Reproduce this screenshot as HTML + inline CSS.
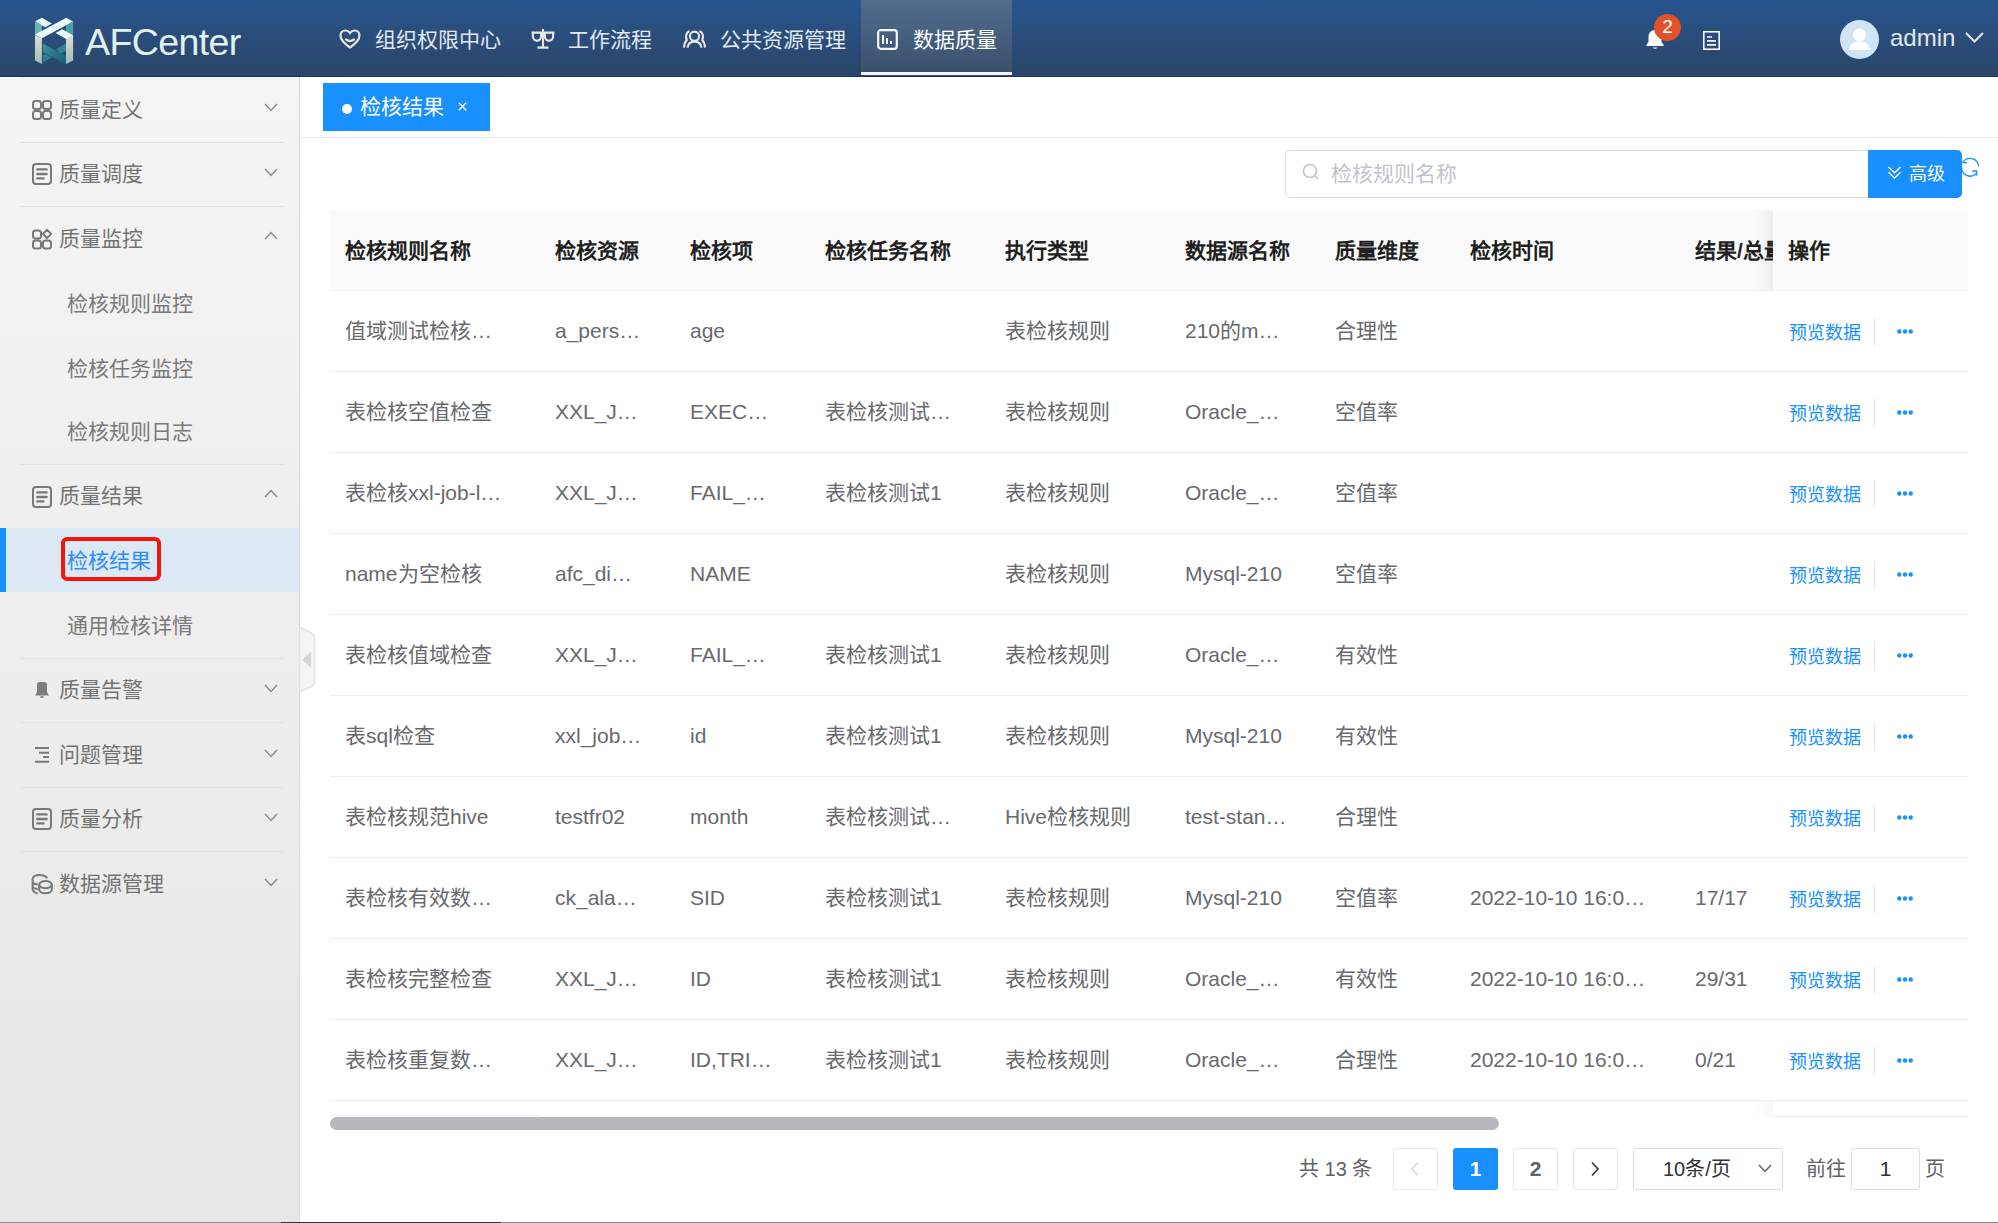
<!DOCTYPE html>
<html lang="zh-CN">
<head>
<meta charset="utf-8">
<style>
*{box-sizing:border-box;margin:0;padding:0}
html,body{width:1998px;height:1223px;overflow:hidden;background:#fff}
body{position:relative;font-family:"Liberation Sans",sans-serif;font-size:21px;color:#606266}
.a{position:absolute}
.t{position:absolute;white-space:nowrap;line-height:24px}
/* header */
#hdr{position:absolute;left:0;top:0;width:1998px;height:77px;background:linear-gradient(#28558f,#2b4566);}
#hdr .line{position:absolute;left:0;top:76px;width:1998px;height:1px;background:#11316a}
.nav{position:absolute;top:0;height:77px;color:#e4e8ee}
.navact{position:absolute;left:861px;top:0;width:151px;height:76px;background:linear-gradient(rgba(157,145,134,0.36),rgba(140,140,135,0.14))}
.navul{position:absolute;left:861px;top:72px;width:151px;height:3px;background:#eef6fb}
/* sidebar */
#side{position:absolute;left:0;top:77px;width:300px;height:1146px;background:linear-gradient(#f4f4f4,#e7e7e7);border-right:1px solid #d9d9d9}
.sep{position:absolute;left:20px;width:264px;height:1px;background:#dfe3e8}
.gi{position:absolute;left:59px;color:#737373;font-size:21px}
.si{position:absolute;left:67px;color:#7a7a7a;font-size:21px}
.chev{position:absolute;left:264px;width:14px;height:9px}
/* main */
#tabbar{position:absolute;left:300px;top:77px;width:1698px;height:61px;border-bottom:1px solid #e6e9ef}
#tab{position:absolute;left:323px;top:83px;width:167px;height:48px;background:#1890ff;color:#fff}
.th{position:absolute;white-space:nowrap;line-height:24px;color:#1f1f1f;font-weight:bold;font-size:21px}
.td{position:absolute;color:#68696d;font-size:21px}
.rowb{position:absolute;left:330px;width:1638px;height:1px;background:#ebeef5}
.op{position:absolute;left:1789px;color:#1890ff;font-size:18px}
.opsep{position:absolute;left:1874px;width:1px;height:28px;background:#e4e7ed}
.dots{position:absolute;left:1897px;width:16px;height:5px}
.pbtn{position:absolute;top:1148px;width:45px;height:42px;border:1px solid #e4e7ed;border-radius:3px;background:#fff}
</style>
</head>
<body>

<!-- HEADER -->
<div id="hdr">
  <div class="line"></div>
  <!-- logo -->
  <svg class="a" style="left:30px;top:14px" width="50" height="54" viewBox="0 0 50 54">
    <defs>
      <linearGradient id="lg1" x1="0" y1="0" x2="0" y2="1"><stop offset="0" stop-color="#dcdfcf"/><stop offset="1" stop-color="#a3bab6"/></linearGradient>
      <linearGradient id="lg2" x1="0" y1="0" x2="1" y2="1"><stop offset="0" stop-color="#44909a"/><stop offset="1" stop-color="#0f5f7e"/></linearGradient>
    </defs>
    <polygon points="4.95,7.5 11.9,11.3 11.9,24.3 4.95,21.2" fill="#6cb5b1"/>
    <polygon points="36,11.3 43.1,7.5 43.1,21.2 36,24.7" fill="#4b9da1"/>
    <polygon points="4.95,21.2 11.9,24.3 11.9,49.9 4.95,46.4" fill="url(#lg1)"/>
    <polygon points="36,24.7 43.1,21.2 43.1,46.4 36,49.9" fill="url(#lg1)"/>
    <polygon points="12.8,29.6 36,42 36,50 12.8,38" fill="url(#lg2)"/>
    <polygon points="26,34.9 36,29.4 36,36.9 30.5,39.6" fill="#2f8595"/>
    <polygon points="12.8,41.3 16,40 21.9,43.4 12.8,48.6" fill="#2a7f92"/>
    <polygon points="5.1,7.3 11.9,3.75 21.9,9.5 15.2,13.25" fill="#e9fbfa"/>
    <polygon points="5.1,20.5 36.2,3.75 43.1,7.5 11.9,24.3" fill="#e9fbfa"/>
    <polygon points="25.6,19 32.2,15.2 43.1,21.2 36.2,25" fill="#e9fbfa"/>
  </svg>
  <div class="t" style="left:85px;top:20px;font-size:37.5px;line-height:44px;color:#e2f1ec;letter-spacing:-0.6px">AFCenter</div>

  <!-- nav -->
  <div class="navact"></div>
  <div class="navul"></div>
  <svg class="a" style="left:339px;top:29px" width="22" height="20" viewBox="0 0 22 20"><path d="M11 18.5 C6 15 1.5 11.5 1.5 6.5 C1.5 3.5 3.8 1.5 6.5 1.5 C8.5 1.5 10 2.5 11 4 C12 2.5 13.5 1.5 15.5 1.5 C18.2 1.5 20.5 3.5 20.5 6.5 C20.5 11.5 16 15 11 18.5Z" fill="none" stroke="#e8e4e0" stroke-width="2.2"/><path d="M7 10.5 Q11 13.5 15 10.5" fill="none" stroke="#e8e4e0" stroke-width="2.2" stroke-linecap="round"/></svg>
  <div class="t nav" style="left:375px;top:28px;height:24px">组织权限中心</div>
  <svg class="a" style="left:531px;top:29px" width="24" height="21" viewBox="0 0 24 21"><g fill="none" stroke="#ebe6e0" stroke-width="2.1"><path d="M0.5 3.6 H23.5 M12 0 V19.5 M6.5 18.6 H17.5"/><path d="M1.9 4 V7.6 A4.1 4.1 0 0 0 10.1 7.6 V4"/><path d="M13.9 4 V7.6 A4.1 4.1 0 0 0 22.1 7.6 V4"/></g></svg>
  <div class="t nav" style="left:568px;top:28px">工作流程</div>
  <svg class="a" style="left:683px;top:29px" width="24" height="20" viewBox="0 0 24 20"><g fill="none" stroke="#ebe6e0" stroke-width="2.1"><circle cx="11.5" cy="7.2" r="4.6"/><path d="M4.6 18.6 C5 14.5 7.8 12.6 11.5 12.6 C15.2 12.6 18 14.5 18.4 18.6"/><path d="M6.5 2 C3 3.3 2.2 8 3.8 11 C2 12.8 1.2 15.5 1.1 18.6"/><path d="M16.5 2 C20 3.3 20.8 8 19.2 11 C21 12.8 21.8 15.5 21.9 18.6"/></g></svg>
  <div class="t nav" style="left:720px;top:28px">公共资源管理</div>
  <svg class="a" style="left:877px;top:29px" width="21" height="21" viewBox="0 0 21 21"><rect x="1.2" y="1.2" width="18.6" height="18.6" rx="2.5" fill="none" stroke="#f4f8fc" stroke-width="2.2"/><rect x="5" y="6" width="2" height="9" fill="#f4f8fc"/><rect x="9" y="9" width="2" height="6" fill="#f4f8fc"/><rect x="13" y="12" width="2" height="3" fill="#f4f8fc"/></svg>
  <div class="t nav" style="left:913px;top:28px;color:#fff">数据质量</div>

  <!-- right -->
  <svg class="a" style="left:1645px;top:29px" width="20" height="21" viewBox="0 0 20 21"><path d="M10 1 C6 1 3.5 4 3.5 8 V13 L1.5 15.5 V17 H18.5 V15.5 L16.5 13 V8 C16.5 4 14 1 10 1Z" fill="#fff"/><path d="M7.5 18.5 Q10 21 12.5 18.5Z" fill="#fff"/></svg>
  <div class="a" style="left:1654px;top:14px;width:27px;height:27px;border-radius:50%;background:#e0522a;color:#fff;font-size:19px;line-height:25px;text-align:center">2</div>
  <svg class="a" style="left:1703px;top:31px" width="17" height="19" viewBox="0 0 17 19"><rect x="0.8" y="0.8" width="15.4" height="17.4" fill="none" stroke="#f4f6fb" stroke-width="1.6"/><path d="M4 6 H9 M4 9.9 H13 M4 13.8 H13" stroke="#f4f6fb" stroke-width="1.7"/></svg>
  <div class="a" style="left:1840px;top:20px;width:39px;height:39px;border-radius:50%;background:#d0e4f8;overflow:hidden">
    <svg width="39" height="39" viewBox="0 0 39 39"><circle cx="19.5" cy="15" r="6.5" fill="#fff"/><path d="M9 30 C9.5 24 13.5 21.5 19.5 21.5 C25.5 21.5 29.5 24 30 30Z" fill="#fff"/></svg>
  </div>
  <div class="t" style="left:1890px;top:24px;font-size:24px;line-height:28px;color:#e6e6e6">admin</div>
  <svg class="a" style="left:1965px;top:32px" width="19" height="11" viewBox="0 0 19 11"><path d="M1 1 L9.5 9.5 L18 1" fill="none" stroke="#e6e6e6" stroke-width="2"/></svg>
</div>

<!-- SIDEBAR -->
<div id="side"></div>
<!-- sidebar items -->
<div class="a" style="left:0;top:77px;width:20px;height:1px;background:#fff"></div>
<div class="sep" style="top:142px"></div>
<div class="sep" style="top:206px"></div>
<div class="sep" style="top:464px"></div>
<div class="sep" style="top:658px"></div>
<div class="sep" style="top:722px"></div>
<div class="sep" style="top:787px"></div>
<div class="sep" style="top:851px"></div>
<div class="a" style="left:0;top:528px;width:299px;height:64px;background:#dde8f5"></div>
<div class="a" style="left:0;top:528px;width:6px;height:64px;background:#1890ff"></div>

<!-- icons -->
<svg class="a" style="left:31px;top:99px" width="22" height="22" viewBox="0 0 22 22"><g fill="none" stroke="#777a7a" stroke-width="2"><rect x="2" y="2" width="8" height="8" rx="2.5"/><rect x="12" y="2" width="8" height="8" rx="2.5"/><rect x="2" y="12" width="8" height="8" rx="2.5"/><rect x="12" y="12" width="8" height="8" rx="2.5"/></g></svg>
<svg class="a" style="left:31px;top:162px" width="22" height="24" viewBox="0 0 22 24"><g fill="none" stroke="#777a7a" stroke-width="2"><rect x="2" y="2" width="18" height="20" rx="3"/></g><g stroke="#777a7a" stroke-width="2.4" stroke-linecap="round"><path d="M6.3 7.4 H15.6 M6.3 12 H15.6 M6.3 16.4 H12.4"/></g></svg>
<svg class="a" style="left:31px;top:228px" width="22" height="22" viewBox="0 0 22 22"><g fill="none" stroke="#777a7a" stroke-width="2"><rect x="2" y="2.5" width="8" height="8" rx="2.5"/><path d="M16 1.7 L20.2 5.9 L16 10.1 L11.8 5.9Z" stroke-linejoin="round"/><rect x="2" y="12.5" width="8" height="8" rx="2.5"/><rect x="12" y="12.5" width="8" height="8" rx="2.5"/></g></svg>
<svg class="a" style="left:31px;top:485px" width="22" height="24" viewBox="0 0 22 24"><g fill="none" stroke="#777a7a" stroke-width="2"><rect x="2" y="2" width="18" height="20" rx="3"/></g><g stroke="#777a7a" stroke-width="2.4" stroke-linecap="round"><path d="M6.3 7.4 H15.6 M6.3 12 H15.6 M6.3 16.4 H12.4"/></g></svg>
<svg class="a" style="left:33px;top:680px" width="18" height="19" viewBox="0 0 18 19"><path d="M6 2 H12 Q14 2 14 4.5 V12 L16 15.5 H2 L4 12 V4.5 Q4 2 6 2Z" fill="#7b7e7e"/><ellipse cx="9" cy="17" rx="1.8" ry="0.9" fill="#7b7e7e"/></svg>
<svg class="a" style="left:33px;top:744px" width="18" height="20" viewBox="0 0 18 20"><g stroke="#777a7a" stroke-width="2"><path d="M2 4 H16 M6 8.8 H16 M10 13 H16 M2 17.8 H16"/></g></svg>
<svg class="a" style="left:31px;top:807px" width="22" height="24" viewBox="0 0 22 24"><g fill="none" stroke="#777a7a" stroke-width="2"><rect x="2" y="2" width="18" height="20" rx="3"/></g><g stroke="#777a7a" stroke-width="2.4" stroke-linecap="round"><path d="M6.3 7.4 H15.6 M6.3 12 H15.6 M6.3 16.4 H12.4"/></g></svg>
<svg class="a" style="left:30px;top:872px" width="24" height="24" viewBox="0 0 24 24"><g fill="none" stroke="#777a7a" stroke-width="2"><path d="M17.2 6.2 C15.8 4 13 3 9.5 3 C5.2 3 2.6 4.8 2.6 7 V17 C2.6 19.5 4.5 20.6 7.8 21.6"/><path d="M2.6 10.5 C3.5 11.6 5.5 12.2 7.8 12.6 M2.6 15 C3.5 16.2 5.5 16.8 7.8 17.2"/><ellipse cx="15.5" cy="12.6" rx="6.3" ry="3.6"/><path d="M9.2 12.6 V17.6 C9.2 19.8 12 21.3 15.5 21.3 C19 21.3 21.8 19.8 21.8 17.6 V12.6"/></g></svg>

<!-- labels -->
<div class="t gi" style="top:98px">质量定义</div>
<div class="t gi" style="top:162px">质量调度</div>
<div class="t gi" style="top:227px">质量监控</div>
<div class="t si" style="top:292px">检核规则监控</div>
<div class="t si" style="top:357px">检核任务监控</div>
<div class="t si" style="top:420px">检核规则日志</div>
<div class="t gi" style="top:484px">质量结果</div>
<div class="t si" style="top:549px;color:#2b8ef8">检核结果</div>
<div class="t si" style="top:614px">通用检核详情</div>
<div class="t gi" style="top:678px">质量告警</div>
<div class="t gi" style="top:743px">问题管理</div>
<div class="t gi" style="top:807px">质量分析</div>
<div class="t gi" style="top:872px">数据源管理</div>
<div class="a" style="left:61px;top:537px;width:100px;height:44px;border:4.5px solid #f2160f;border-radius:6px"></div>

<!-- chevrons -->
<svg class="chev" style="top:103px" viewBox="0 0 14 9"><path d="M1 1 L7 7.5 L13 1" fill="none" stroke="#8c8c8c" stroke-width="1.5"/></svg>
<svg class="chev" style="top:168px" viewBox="0 0 14 9"><path d="M1 1 L7 7.5 L13 1" fill="none" stroke="#8c8c8c" stroke-width="1.5"/></svg>
<svg class="chev" style="top:231px" viewBox="0 0 14 9"><path d="M1 8 L7 1.5 L13 8" fill="none" stroke="#8c8c8c" stroke-width="1.5"/></svg>
<svg class="chev" style="top:489px" viewBox="0 0 14 9"><path d="M1 8 L7 1.5 L13 8" fill="none" stroke="#8c8c8c" stroke-width="1.5"/></svg>
<svg class="chev" style="top:684px" viewBox="0 0 14 9"><path d="M1 1 L7 7.5 L13 1" fill="none" stroke="#8c8c8c" stroke-width="1.5"/></svg>
<svg class="chev" style="top:749px" viewBox="0 0 14 9"><path d="M1 1 L7 7.5 L13 1" fill="none" stroke="#8c8c8c" stroke-width="1.5"/></svg>
<svg class="chev" style="top:813px" viewBox="0 0 14 9"><path d="M1 1 L7 7.5 L13 1" fill="none" stroke="#8c8c8c" stroke-width="1.5"/></svg>
<svg class="chev" style="top:878px" viewBox="0 0 14 9"><path d="M1 1 L7 7.5 L13 1" fill="none" stroke="#8c8c8c" stroke-width="1.5"/></svg>

<!-- collapse handle -->
<svg class="a" style="left:299px;top:625px" width="18" height="70" viewBox="0 0 18 70"><path d="M0.5 2.2 L10.3 7 Q15.5 9.5 15.5 12.8 V57 Q15.5 60.3 10.3 62.5 L0.5 67 Z" fill="#f4f4f4" stroke="#dde3ea" stroke-width="1.6"/></svg>
<svg class="a" style="left:301px;top:650px" width="11" height="20" viewBox="0 0 11 20"><path d="M10.1 1.5 V18 L1.3 9.7Z" fill="#d5d5d5"/></svg>
<!-- MAIN -->
<!--MAIN_START-->
<!-- tab bar -->
<div id="tabbar"></div>
<div id="tab"><div class="a" style="left:19px;top:21px;width:10px;height:10px;border-radius:50%;background:#fff"></div><div class="t" style="left:37px;top:12px;color:#fff">检核结果</div><svg class="a" style="left:135px;top:19px" width="9" height="9" viewBox="0 0 9 9"><path d="M0.8 0.8 L8.2 8.2 M8.2 0.8 L0.8 8.2" stroke="#fff" stroke-width="1.4"/></svg></div>
<!-- search -->
<div class="a" style="left:1285px;top:150px;width:600px;height:48px;border:1px solid #dcdfe6;border-radius:5px;background:#fff"></div>
<svg class="a" style="left:1302px;top:163px" width="18" height="18" viewBox="0 0 18 18"><circle cx="8" cy="8" r="6.5" fill="none" stroke="#c0c4cc" stroke-width="1.6"/><path d="M12.6 12.6 L16 16" stroke="#c0c4cc" stroke-width="1.6"/></svg>
<div class="t" style="left:1331px;top:162px;color:#c0c4cc">检核规则名称</div>
<div class="a" style="left:1868px;top:150px;width:94px;height:48px;background:#1890ff;border-radius:0 5px 5px 0"></div>
<svg class="a" style="left:1886px;top:165px" width="18" height="16" viewBox="0 0 18 16"><path d="M2.5 2 L8.5 7.8 L14.5 2 M2.5 7.2 L8.5 13 L14.5 7.2" fill="none" stroke="#fff" stroke-width="1.4"/></svg>
<div class="t" style="left:1909px;top:162px;color:#fff;font-size:18px">高级</div>
<svg class="a" style="left:1958px;top:155px" width="24" height="24" viewBox="0 0 24 24"><g fill="none" stroke="#1890ff" stroke-width="1.4"><path d="M4.6 7.7 H9"/><path d="M4.6 7.7 A8.6 8.6 0 0 1 20.6 11.5"/><path d="M3.6 12.5 A8.6 8.6 0 0 0 18.6 18.2"/><path d="M14.3 16 H18.6 V20.6"/></g></svg>
<!-- table -->
<div class="a" style="left:330px;top:210px;width:1638px;height:80px;background:#fafafa"></div>
<div class="rowb" style="top:290px"></div>
<div class="rowb" style="top:371px"></div>
<div class="rowb" style="top:452px"></div>
<div class="rowb" style="top:533px"></div>
<div class="rowb" style="top:614px"></div>
<div class="rowb" style="top:695px"></div>
<div class="rowb" style="top:776px"></div>
<div class="rowb" style="top:857px"></div>
<div class="rowb" style="top:938px"></div>
<div class="rowb" style="top:1019px"></div>
<div class="rowb" style="top:1100px"></div>
<div class="a" style="left:330px;top:210px;width:1443px;height:900px;overflow:hidden">
<div class="th" style="left:15px;top:29px">检核规则名称</div>
<div class="th" style="left:225px;top:29px">检核资源</div>
<div class="th" style="left:360px;top:29px">检核项</div>
<div class="th" style="left:495px;top:29px">检核任务名称</div>
<div class="th" style="left:675px;top:29px">执行类型</div>
<div class="th" style="left:855px;top:29px">数据源名称</div>
<div class="th" style="left:1005px;top:29px">质量维度</div>
<div class="th" style="left:1140px;top:29px">检核时间</div>
<div class="th" style="left:1365px;top:29px">结果/总量</div>
<div class="td t" style="left:15px;top:109px">值域测试检核…</div>
<div class="td t" style="left:225px;top:109px">a_pers…</div>
<div class="td t" style="left:360px;top:109px">age</div>
<div class="td t" style="left:675px;top:109px">表检核规则</div>
<div class="td t" style="left:855px;top:109px">210的m…</div>
<div class="td t" style="left:1005px;top:109px">合理性</div>
<div class="td t" style="left:15px;top:190px">表检核空值检查</div>
<div class="td t" style="left:225px;top:190px">XXL_J…</div>
<div class="td t" style="left:360px;top:190px">EXEC…</div>
<div class="td t" style="left:495px;top:190px">表检核测试…</div>
<div class="td t" style="left:675px;top:190px">表检核规则</div>
<div class="td t" style="left:855px;top:190px">Oracle_…</div>
<div class="td t" style="left:1005px;top:190px">空值率</div>
<div class="td t" style="left:15px;top:271px">表检核xxl-job-l…</div>
<div class="td t" style="left:225px;top:271px">XXL_J…</div>
<div class="td t" style="left:360px;top:271px">FAIL_…</div>
<div class="td t" style="left:495px;top:271px">表检核测试1</div>
<div class="td t" style="left:675px;top:271px">表检核规则</div>
<div class="td t" style="left:855px;top:271px">Oracle_…</div>
<div class="td t" style="left:1005px;top:271px">空值率</div>
<div class="td t" style="left:15px;top:352px">name为空检核</div>
<div class="td t" style="left:225px;top:352px">afc_di…</div>
<div class="td t" style="left:360px;top:352px">NAME</div>
<div class="td t" style="left:675px;top:352px">表检核规则</div>
<div class="td t" style="left:855px;top:352px">Mysql-210</div>
<div class="td t" style="left:1005px;top:352px">空值率</div>
<div class="td t" style="left:15px;top:433px">表检核值域检查</div>
<div class="td t" style="left:225px;top:433px">XXL_J…</div>
<div class="td t" style="left:360px;top:433px">FAIL_…</div>
<div class="td t" style="left:495px;top:433px">表检核测试1</div>
<div class="td t" style="left:675px;top:433px">表检核规则</div>
<div class="td t" style="left:855px;top:433px">Oracle_…</div>
<div class="td t" style="left:1005px;top:433px">有效性</div>
<div class="td t" style="left:15px;top:514px">表sql检查</div>
<div class="td t" style="left:225px;top:514px">xxl_job…</div>
<div class="td t" style="left:360px;top:514px">id</div>
<div class="td t" style="left:495px;top:514px">表检核测试1</div>
<div class="td t" style="left:675px;top:514px">表检核规则</div>
<div class="td t" style="left:855px;top:514px">Mysql-210</div>
<div class="td t" style="left:1005px;top:514px">有效性</div>
<div class="td t" style="left:15px;top:595px">表检核规范hive</div>
<div class="td t" style="left:225px;top:595px">testfr02</div>
<div class="td t" style="left:360px;top:595px">month</div>
<div class="td t" style="left:495px;top:595px">表检核测试…</div>
<div class="td t" style="left:675px;top:595px">Hive检核规则</div>
<div class="td t" style="left:855px;top:595px">test-stan…</div>
<div class="td t" style="left:1005px;top:595px">合理性</div>
<div class="td t" style="left:15px;top:676px">表检核有效数…</div>
<div class="td t" style="left:225px;top:676px">ck_ala…</div>
<div class="td t" style="left:360px;top:676px">SID</div>
<div class="td t" style="left:495px;top:676px">表检核测试1</div>
<div class="td t" style="left:675px;top:676px">表检核规则</div>
<div class="td t" style="left:855px;top:676px">Mysql-210</div>
<div class="td t" style="left:1005px;top:676px">空值率</div>
<div class="td t" style="left:1140px;top:676px">2022-10-10 16:0…</div>
<div class="td t" style="left:1365px;top:676px">17/17</div>
<div class="td t" style="left:15px;top:757px">表检核完整检查</div>
<div class="td t" style="left:225px;top:757px">XXL_J…</div>
<div class="td t" style="left:360px;top:757px">ID</div>
<div class="td t" style="left:495px;top:757px">表检核测试1</div>
<div class="td t" style="left:675px;top:757px">表检核规则</div>
<div class="td t" style="left:855px;top:757px">Oracle_…</div>
<div class="td t" style="left:1005px;top:757px">有效性</div>
<div class="td t" style="left:1140px;top:757px">2022-10-10 16:0…</div>
<div class="td t" style="left:1365px;top:757px">29/31</div>
<div class="td t" style="left:15px;top:838px">表检核重复数…</div>
<div class="td t" style="left:225px;top:838px">XXL_J…</div>
<div class="td t" style="left:360px;top:838px">ID,TRI…</div>
<div class="td t" style="left:495px;top:838px">表检核测试1</div>
<div class="td t" style="left:675px;top:838px">表检核规则</div>
<div class="td t" style="left:855px;top:838px">Oracle_…</div>
<div class="td t" style="left:1005px;top:838px">合理性</div>
<div class="td t" style="left:1140px;top:838px">2022-10-10 16:0…</div>
<div class="td t" style="left:1365px;top:838px">0/21</div>
</div>
<div class="a" style="left:1755px;top:210px;width:18px;height:80px;background:linear-gradient(to right,rgba(0,0,0,0),rgba(0,0,0,0.05))"></div>
<div class="a" style="left:1755px;top:1101px;width:18px;height:15px;background:linear-gradient(to right,rgba(0,0,0,0),rgba(0,0,0,0.035))"></div>
<div class="a" style="left:1773px;top:210px;width:195px;height:80px;background:#fafafa"></div>
<div class="a" style="left:1773px;top:1101px;width:195px;height:16px;background:#fff;border-bottom:1px solid #ebeef5"></div>
<div class="a" style="left:330px;top:1115px;width:210px;height:1px;background:#ebeef5"></div>
<div class="th t" style="left:1788px;top:239px">操作</div>
<div class="op t" style="top:321px">预览数据</div>
<div class="opsep" style="top:318px"></div>
<svg class="dots" style="top:329px" viewBox="0 0 16 5"><circle cx="2.3" cy="2.5" r="2.2" fill="#1890ff"/><circle cx="8" cy="2.5" r="2.2" fill="#1890ff"/><circle cx="13.7" cy="2.5" r="2.2" fill="#1890ff"/></svg>
<div class="op t" style="top:402px">预览数据</div>
<div class="opsep" style="top:399px"></div>
<svg class="dots" style="top:410px" viewBox="0 0 16 5"><circle cx="2.3" cy="2.5" r="2.2" fill="#1890ff"/><circle cx="8" cy="2.5" r="2.2" fill="#1890ff"/><circle cx="13.7" cy="2.5" r="2.2" fill="#1890ff"/></svg>
<div class="op t" style="top:483px">预览数据</div>
<div class="opsep" style="top:480px"></div>
<svg class="dots" style="top:491px" viewBox="0 0 16 5"><circle cx="2.3" cy="2.5" r="2.2" fill="#1890ff"/><circle cx="8" cy="2.5" r="2.2" fill="#1890ff"/><circle cx="13.7" cy="2.5" r="2.2" fill="#1890ff"/></svg>
<div class="op t" style="top:564px">预览数据</div>
<div class="opsep" style="top:561px"></div>
<svg class="dots" style="top:572px" viewBox="0 0 16 5"><circle cx="2.3" cy="2.5" r="2.2" fill="#1890ff"/><circle cx="8" cy="2.5" r="2.2" fill="#1890ff"/><circle cx="13.7" cy="2.5" r="2.2" fill="#1890ff"/></svg>
<div class="op t" style="top:645px">预览数据</div>
<div class="opsep" style="top:642px"></div>
<svg class="dots" style="top:653px" viewBox="0 0 16 5"><circle cx="2.3" cy="2.5" r="2.2" fill="#1890ff"/><circle cx="8" cy="2.5" r="2.2" fill="#1890ff"/><circle cx="13.7" cy="2.5" r="2.2" fill="#1890ff"/></svg>
<div class="op t" style="top:726px">预览数据</div>
<div class="opsep" style="top:723px"></div>
<svg class="dots" style="top:734px" viewBox="0 0 16 5"><circle cx="2.3" cy="2.5" r="2.2" fill="#1890ff"/><circle cx="8" cy="2.5" r="2.2" fill="#1890ff"/><circle cx="13.7" cy="2.5" r="2.2" fill="#1890ff"/></svg>
<div class="op t" style="top:807px">预览数据</div>
<div class="opsep" style="top:804px"></div>
<svg class="dots" style="top:815px" viewBox="0 0 16 5"><circle cx="2.3" cy="2.5" r="2.2" fill="#1890ff"/><circle cx="8" cy="2.5" r="2.2" fill="#1890ff"/><circle cx="13.7" cy="2.5" r="2.2" fill="#1890ff"/></svg>
<div class="op t" style="top:888px">预览数据</div>
<div class="opsep" style="top:885px"></div>
<svg class="dots" style="top:896px" viewBox="0 0 16 5"><circle cx="2.3" cy="2.5" r="2.2" fill="#1890ff"/><circle cx="8" cy="2.5" r="2.2" fill="#1890ff"/><circle cx="13.7" cy="2.5" r="2.2" fill="#1890ff"/></svg>
<div class="op t" style="top:969px">预览数据</div>
<div class="opsep" style="top:966px"></div>
<svg class="dots" style="top:977px" viewBox="0 0 16 5"><circle cx="2.3" cy="2.5" r="2.2" fill="#1890ff"/><circle cx="8" cy="2.5" r="2.2" fill="#1890ff"/><circle cx="13.7" cy="2.5" r="2.2" fill="#1890ff"/></svg>
<div class="op t" style="top:1050px">预览数据</div>
<div class="opsep" style="top:1047px"></div>
<svg class="dots" style="top:1058px" viewBox="0 0 16 5"><circle cx="2.3" cy="2.5" r="2.2" fill="#1890ff"/><circle cx="8" cy="2.5" r="2.2" fill="#1890ff"/><circle cx="13.7" cy="2.5" r="2.2" fill="#1890ff"/></svg>
<div class="a" style="left:330px;top:1117px;width:1169px;height:13px;border-radius:7px;background:#b6b8bd"></div>
<div class="t" style="left:1299px;top:1157px;color:#606266;font-size:20px">共 13 条</div>
<div class="pbtn" style="left:1393px"></div>
<svg class="a" style="left:1409px;top:1161px" width="12" height="16" viewBox="0 0 12 16"><path d="M9 1.5 L3 8 L9 14.5" fill="none" stroke="#d3d8e0" stroke-width="1.6"/></svg>
<div class="a" style="left:1453px;top:1148px;width:45px;height:42px;background:#1890ff;border-radius:3px;color:#fff;font-weight:bold;text-align:center;line-height:42px">1</div>
<div class="pbtn" style="left:1513px;color:#606266;font-weight:bold;text-align:center;line-height:40px">2</div>
<div class="pbtn" style="left:1573px"></div>
<svg class="a" style="left:1589px;top:1161px" width="12" height="16" viewBox="0 0 12 16"><path d="M3 1.5 L9 8 L3 14.5" fill="none" stroke="#303133" stroke-width="1.6"/></svg>
<div class="a" style="left:1633px;top:1148px;width:150px;height:42px;border:1px solid #dcdfe6;border-radius:3px"></div>
<div class="t" style="left:1663px;top:1157px;color:#303133;font-size:20px">10条/页</div>
<svg class="a" style="left:1758px;top:1164px" width="14" height="9" viewBox="0 0 14 9"><path d="M1 1 L7 7.5 L13 1" fill="none" stroke="#606266" stroke-width="1.5"/></svg>
<div class="t" style="left:1806px;top:1157px;color:#606266;font-size:20px">前往</div>
<div class="a" style="left:1851px;top:1148px;width:69px;height:42px;border:1px solid #dcdfe6;border-radius:3px;text-align:center;line-height:40px;color:#303133">1</div>
<div class="t" style="left:1925px;top:1157px;color:#606266;font-size:20px">页</div>
<div class="a" style="left:0;top:1222px;width:1998px;height:1px;background:#8c8c8c"></div>
<div class="a" style="left:281px;top:1222px;width:220px;height:1px;background:#333"></div>
<!--MAIN_END-->

</body>
</html>
